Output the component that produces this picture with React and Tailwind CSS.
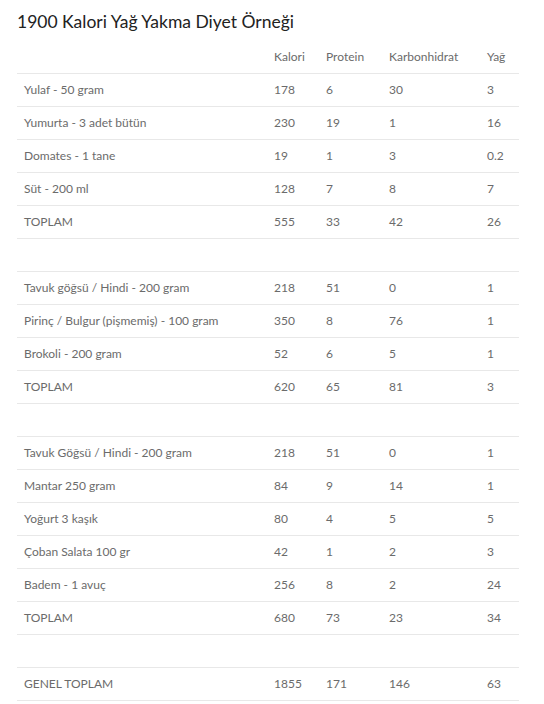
import { Fragment } from 'react';

const groups = [
	[
		['Yulaf - 50 gram', '178', '6', '30', '3'],
		['Yumurta - 3 adet bütün', '230', '19', '1', '16'],
		['Domates - 1 tane', '19', '1', '3', '0.2'],
		['Süt - 200 ml', '128', '7', '8', '7'],
		['TOPLAM', '555', '33', '42', '26'],
	],
	[
		['Tavuk göğsü / Hindi - 200 gram', '218', '51', '0', '1'],
		['Pirinç / Bulgur (pişmemiş) - 100 gram', '350', '8', '76', '1'],
		['Brokoli - 200 gram', '52', '6', '5', '1'],
		['TOPLAM', '620', '65', '81', '3'],
	],
	[
		['Tavuk Göğsü / Hindi - 200 gram', '218', '51', '0', '1'],
		['Mantar 250 gram', '84', '9', '14', '1'],
		['Yoğurt 3 kaşık', '80', '4', '5', '5'],
		['Çoban Salata 100 gr', '42', '1', '2', '3'],
		['Badem - 1 avuç', '256', '8', '2', '24'],
		['TOPLAM', '680', '73', '23', '34'],
	],
	[['GENEL TOPLAM', '1855', '171', '146', '63']],
];

function Row({ cells }) {
	return (
		<tr className="h-[33px] border-t border-[#e8e8e8]">
			{cells.map((c, i) => (
				<td key={i} className="px-[7px] pt-[1px] align-middle">
					{c}
				</td>
			))}
		</tr>
	);
}

function Spacer() {
	return (
		<tr className="h-[33px] border-t border-[#e8e8e8]">
			<td colSpan={5}></td>
		</tr>
	);
}

export default function App() {
	return (
		<div
			className="bg-white min-h-[704px] px-[17px] pt-[9px] text-[#6b6b6b]"
			style={{ fontFamily: 'Lato, sans-serif' }}
		>
			<h2 className="text-[17.5px] leading-[26px] text-[#222] mb-[6px]">
				1900 Kalori Yağ Yakma Diyet Örneği
			</h2>
			<table className="w-[502px] table-fixed border-collapse text-[12px]">
				<colgroup>
					<col className="w-[250px]" />
					<col className="w-[52px]" />
					<col className="w-[63px]" />
					<col className="w-[98px]" />
					<col className="w-[39px]" />
				</colgroup>
				<thead>
					<tr className="h-[32px]">
						<th></th>
						<th className="px-[7px] pt-[1px] text-left font-normal">Kalori</th>
						<th className="px-[7px] pt-[1px] text-left font-normal">Protein</th>
						<th className="px-[7px] pt-[1px] text-left font-normal">Karbonhidrat</th>
						<th className="px-[7px] pt-[1px] text-left font-normal">Yağ</th>
					</tr>
				</thead>
				<tbody className="border-b border-[#e8e8e8]">
					{groups.map((g, gi) => (
						<Fragment key={gi}>
							{gi > 0 && <Spacer />}
							{g.map((r, ri) => (
								<Row key={ri} cells={r} />
							))}
						</Fragment>
					))}
				</tbody>
			</table>
		</div>
	);
}
